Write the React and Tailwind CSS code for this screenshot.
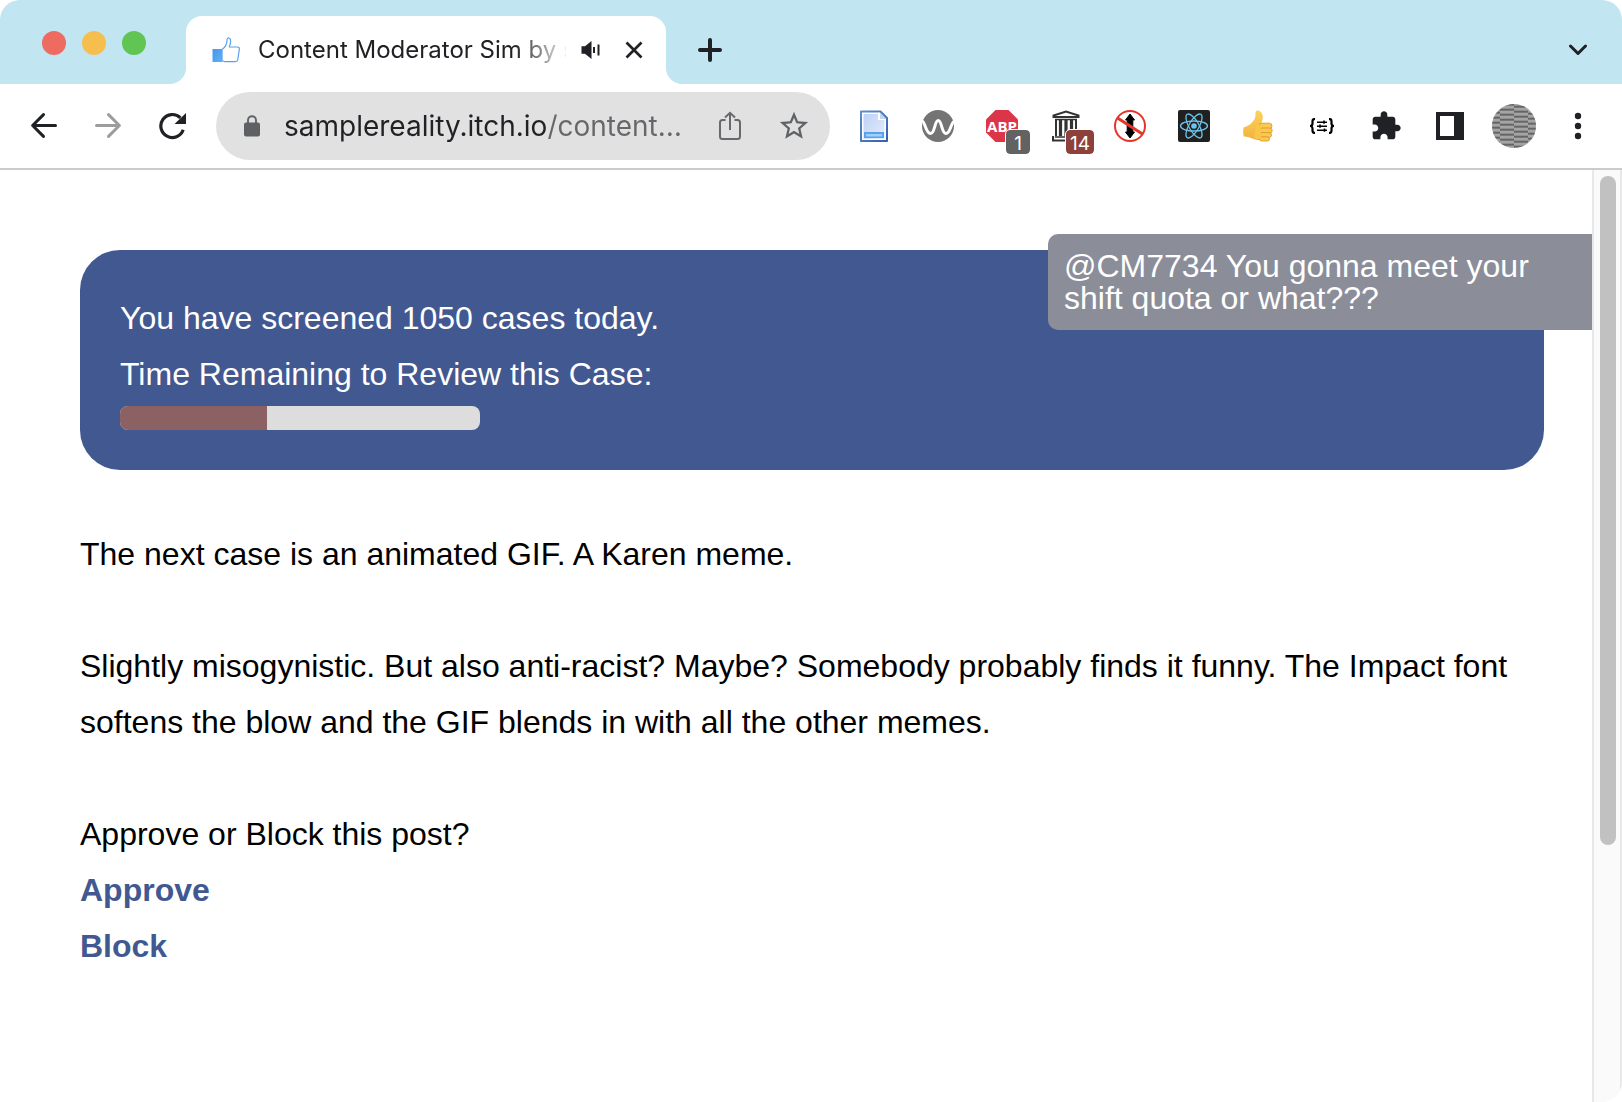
import React from "react";

const UI_FONT = "font-[Inter,'Liberation_Sans',sans-serif]";
const PAGE_FONT = "font-['Liberation_Sans',Arial,sans-serif]";

function ToolButton({ label, children }) {
  return (
    <button type="button" aria-label={label} className="relative flex h-16 w-16 shrink-0 items-center justify-center">
      {children}
    </button>
  );
}

function Badge({ className, children }) {
  return (
    <span className={"absolute top-[36px] flex h-6 items-center justify-center rounded-[4px] pt-1 text-[19px] leading-6 text-white outline-1 outline-white " + className}>
      {children}
    </span>
  );
}

function BackIcon() {
  return (
    <svg width="28" height="28" viewBox="0 0 28 28" fill="none" stroke="#202124" strokeWidth="3" strokeLinecap="round" strokeLinejoin="round">
      <path d="M25.5 13.500H2.800M13.500 2.600 2.600 13.500 13.500 24.400" />
    </svg>
  );
}

function ForwardIcon() {
  return (
    <svg width="28" height="28" viewBox="0 0 28 28" fill="none" stroke="#9c9c9c" strokeWidth="3" strokeLinecap="round" strokeLinejoin="round">
      <path d="M2.500 13.500H25.200M14.500 2.600 25.400 13.500 14.500 24.400" />
    </svg>
  );
}

function ReloadIcon() {
  return (
    <svg width="28" height="28" viewBox="0 0 28 28">
      <path d="M25.200 17.800A11.500 11.500 0 1 1 22.400 5.800" fill="none" stroke="#202124" strokeWidth="3.200" />
      <path d="M28 1V12H16.500Z" fill="#202124" />
    </svg>
  );
}

function LikeIcon() {
  return (
    <svg width="28" height="26" viewBox="0 0 28 26" className="shrink-0">
      <defs>
        <linearGradient id="like" x1="0" y1="0" x2="1" y2="1">
          <stop offset="0" stopColor="#4b93ea" />
          <stop offset="1" stopColor="#5cb4f5" />
        </linearGradient>
      </defs>
      <path d="M0.500 12H10V25H0.500Z" fill="url(#like)" />
      <path d="M10 12.500C13 10.500 15 7.500 15 3C15 0 18.600 0.300 18.600 4C18.600 6.500 17.600 8.500 17.400 10H25.500C27 10 27.500 11 27.300 12.500L25.800 22.500C25.500 24 24.800 24.600 23.500 24.600H13C11.500 24.600 11 23.800 10 23.600Z" fill="white" stroke="#5b9fef" strokeWidth="1.200" />
    </svg>
  );
}

function SpeakerIcon() {
  return (
    <svg width="20" height="18" viewBox="0 0 20 18" fill="#202124" className="shrink-0">
      <path d="M0.500 5.200H4L10.500 0V18L4 12.800H0.500Z" />
      <path d="M12 6H14V12H12ZM16.500 3.500H18.500V14.500H16.500Z" />
    </svg>
  );
}

function DocIcon() {
  return (
    <svg width="28" height="32" viewBox="0 0 28 32">
      <defs>
        <linearGradient id="doc" x1="0" y1="0" x2="1" y2="1">
          <stop offset="0" stopColor="#bdd0f6" />
          <stop offset="1" stopColor="#e6eefd" />
        </linearGradient>
        <linearGradient id="docEdge" x1="0" y1="0" x2="1" y2="1">
          <stop offset="0" stopColor="#5c8fcb" />
          <stop offset="1" stopColor="#3560b0" />
        </linearGradient>
      </defs>
      <path d="M1 1.500H20.500L27 8V31H1Z" fill="white" stroke="url(#docEdge)" strokeWidth="2" strokeLinejoin="round" />
      <path d="M3.500 4H18V10H24.500V29H3.500Z" fill="url(#doc)" />
      <path d="M18.500 2V9.500H26Z" fill="white" />
      <path d="M20 2 27 9H20Z" fill="#7f9fce" opacity=".45" />
      <path d="M4 22H24V28H4Z" fill="#58a2ee" />
      <path d="M6 24H22V26.500H6Z" fill="#9fd0fb" />
    </svg>
  );
}

function WaveIcon() {
  return (
    <svg width="32" height="32" viewBox="0 0 32 32">
      <circle cx="16" cy="16" r="16" fill="#747474" />
      <path d="M0 11C3 11 3.500 23.500 8.500 23.500C13 23.500 12.500 10.500 16.200 10.500C20 10.500 19.500 23.500 24 23.500C28.500 23.500 28.500 13.500 32 11.500" fill="none" stroke="white" strokeWidth="3" />
    </svg>
  );
}

function AdblockIcon() {
  return (
    <svg width="32" height="32" viewBox="0 0 32 32">
      <path d="M9.500 0H22.500L32 9.500V22.500L22.500 32H9.500L0 22.500V9.500Z" fill="#dc3548" />
      <text x="16" y="22" textAnchor="middle" fontFamily="Open Sans, sans-serif" fontWeight="700" fontSize="15" fill="white">ABP</text>
    </svg>
  );
}

function MuseumIcon() {
  return (
    <svg width="28" height="32" viewBox="0 0 28 32" fill="none" stroke="#333333">
      <path d="M1.500 7V5.500L14 1.500L26.500 5.500V7Z" fill="white" strokeWidth="2" />
      <path d="M3 9.500H25M3 27H25" strokeWidth="1.500" />
      <path d="M1 26V30.500H27V26" strokeWidth="2.200" />
      <path d="M4 9V26M24 9V26" strokeWidth="2" />
      <path d="M8.500 9.500V26M14 9.500V26M19.500 9.500V26" strokeWidth="3.200" />
    </svg>
  );
}

function NoScrollIcon() {
  return (
    <svg width="32" height="32" viewBox="0 0 32 32">
      <path d="M16 4 20.500 10H18.800V22H20.500L16 28L11.500 22H13.200V10H11.500Z" fill="black" stroke="black" strokeWidth="1" strokeLinejoin="round" />
      <circle cx="16" cy="16" r="15" fill="none" stroke="#e5352b" strokeWidth="2" />
      <path d="M3.500 8 28.500 24" stroke="#e5352b" strokeWidth="3" />
    </svg>
  );
}

function ReactIcon() {
  return (
    <svg width="32" height="32" viewBox="0 0 32 32">
      <rect width="32" height="32" rx="2" fill="#202020" />
      <g fill="none" stroke="#6ec4ec" strokeWidth="1.300">
        <ellipse cx="16" cy="16" rx="13.500" ry="5" />
        <ellipse cx="16" cy="16" rx="13.500" ry="5" transform="rotate(60 16 16)" />
        <ellipse cx="16" cy="16" rx="13.500" ry="5" transform="rotate(120 16 16)" />
      </g>
      <circle cx="16" cy="16" r="2.800" fill="#6ec4ec" />
    </svg>
  );
}

function ThumbIcon() {
  return (
    <svg width="30" height="32" viewBox="0 0 30 32">
      <defs>
        <linearGradient id="skin" x1="0" y1="0" x2="0" y2="1">
          <stop offset="0" stopColor="#fbd45c" />
          <stop offset="1" stopColor="#f2b13c" />
        </linearGradient>
      </defs>
      <path d="M0.500 17.500C6 16 10 12.500 12 8C13 5 11.800 2 13.500 0.800C16 -0.300 19.500 2 19.800 6.500C20 9.500 18.500 12 18.300 14L22 29C18 31 12 30 8 28C5 26.500 3 27.500 1 26.500C0 24 0 20 0.500 17.500Z" fill="url(#skin)" />
      <g fill="#fac94f" stroke="#d9922a" strokeWidth=".8">
        <rect x="16" y="13.200" width="13" height="5.600" rx="2.800" />
        <rect x="16.500" y="18" width="12.700" height="5.200" rx="2.600" />
        <rect x="16.500" y="22.600" width="12" height="4.800" rx="2.400" />
        <rect x="16.500" y="26.800" width="10" height="4.200" rx="2.100" />
      </g>
      <path d="M13.500 14.500C16 13.500 18 15 18 17V28C16 30 12 29 11 27Z" fill="#f9c54a" />
    </svg>
  );
}

function BracesIcon() {
  return (
    <svg width="26" height="16" viewBox="0 0 26 16" fill="none" stroke="black">
      <path d="M6 1.200H5.200C3.700 1.200 3.500 2 3.500 3.500V5.500C3.500 7 2.500 8 1 8C2.500 8 3.500 9 3.500 10.500V12.500C3.500 14 3.700 14.800 5.200 14.800H6" strokeWidth="2.200" />
      <path d="M20 1.200H20.800C22.300 1.200 22.500 2 22.500 3.500V5.500C22.500 7 23.500 8 25 8C23.500 8 22.500 9 22.500 10.500V12.500C22.500 14 22.300 14.800 20.800 14.800H20" strokeWidth="2.200" />
      <path d="M8 4.200H18M8 8.200H18M8 12.200H18" strokeWidth="1.600" />
      <path d="M15 2.600V5.800M11 6.600V9.800M15.500 10.600V13.800" strokeWidth="1.600" />
    </svg>
  );
}

function PuzzleIcon() {
  return (
    <svg width="32" height="32" viewBox="0 0 24 24" fill="#202124">
      <path d="M20.500 11H19V7c0-1.100-.9-2-2-2h-4V3.500C13 2.120 11.880 1 10.500 1S8 2.120 8 3.500V5H4c-1.100 0-1.990.9-1.990 2v3.800H3.500c1.490 0 2.700 1.210 2.700 2.700s-1.210 2.700-2.700 2.700H2V20c0 1.100.9 2 2 2h3.800v-1.500c0-1.490 1.210-2.700 2.700-2.700 1.490 0 2.700 1.210 2.700 2.700V22H17c1.100 0 2-.9 2-2v-4h1.500c1.380 0 2.500-1.120 2.500-2.500S21.880 11 20.500 11z" />
    </svg>
  );
}

function SidePanelIcon() {
  return (
    <svg width="28" height="28" viewBox="0 0 28 28">
      <path d="M0 0H28V28H0ZM4 4V24H18V4Z" fill="#202124" fillRule="evenodd" />
    </svg>
  );
}

const STRIPE_COLUMNS = [
  { x: 0, w: 8, off: 2 },
  { x: 8, w: 14, off: 0 },
  { x: 22, w: 14, off: 3 },
  { x: 36, w: 8, off: 1 },
];

function AvatarIcon() {
  return (
    <svg width="44" height="44" viewBox="0 0 44 44">
      <defs>
        <clipPath id="avatar"><circle cx="22" cy="22" r="22" /></clipPath>
      </defs>
      <g clipPath="url(#avatar)">
        <rect width="44" height="44" fill="#8f8f8f" />
        {STRIPE_COLUMNS.map((c) =>
          Array.from({ length: 10 }, (_, i) => (
            <g key={c.x + "-" + i}>
              <rect x={c.x} y={i * 5 - c.off} width={c.w} height="1.500" fill="#656565" />
              <rect x={c.x} y={i * 5 - c.off + 2.500} width={c.w} height="1" fill="#b9b9b9" />
            </g>
          ))
        )}
      </g>
    </svg>
  );
}

function MenuIcon() {
  return (
    <svg width="8" height="28" viewBox="0 0 8 28" fill="#202124">
      <circle cx="4" cy="4" r="3.200" />
      <circle cx="4" cy="14" r="3.200" />
      <circle cx="4" cy="24" r="3.200" />
    </svg>
  );
}

function TabStrip() {
  return (
    <div className="flex h-[84px]">
      <div className="flex w-[186px] shrink-0 gap-4 rounded-br-2xl bg-[#c1e6f1] pt-[31px] pl-[42px]">
        <button type="button" aria-label="Close window" className="size-6 rounded-full bg-[#ed6b60]" />
        <button type="button" aria-label="Minimize window" className="size-6 rounded-full bg-[#f5be4f]" />
        <button type="button" aria-label="Zoom window" className="size-6 rounded-full bg-[#61c554]" />
      </div>
      <div className="w-[480px] shrink-0 bg-[#c1e6f1] pt-4">
        <div className="flex h-[68px] items-center rounded-t-2xl bg-white pr-[23px] pl-[26px]">
          <LikeIcon />
          <span className="ml-[18px] w-[308px] overflow-hidden text-[24px] leading-8 whitespace-nowrap text-[#202124] [mask-image:linear-gradient(to_right,black_256px,transparent_312px)]">
            Content Moderator Sim by s
          </span>
          <button type="button" aria-label="Mute tab" className="ml-[15px]">
            <SpeakerIcon />
          </button>
          <button type="button" aria-label="Close tab" className="ml-auto">
            <svg width="18" height="18" viewBox="0 0 18 18" stroke="#202124" strokeWidth="2.700">
              <path d="M1.500 1.500 16.500 16.500M16.500 1.500 1.500 16.500" />
            </svg>
          </button>
        </div>
      </div>
      <div className="flex flex-1 items-center justify-between rounded-bl-2xl bg-[#c1e6f1] pt-4 pr-[34px] pl-8">
        <button type="button" aria-label="New tab">
          <svg width="24" height="24" viewBox="0 0 24 24" stroke="#202124" strokeWidth="4" strokeLinecap="round">
            <path d="M12 2V22M2 12H22" />
          </svg>
        </button>
        <button type="button" aria-label="Search tabs">
          <svg width="20" height="12" viewBox="0 0 20 12" fill="none" stroke="#202124" strokeWidth="3" strokeLinecap="round" strokeLinejoin="round">
            <path d="M2.500 2 10 9.500 17.500 2" />
          </svg>
        </button>
      </div>
    </div>
  );
}

function AddressBar() {
  return (
    <div className="mx-3 flex h-[68px] min-w-0 flex-1 items-center rounded-full bg-[#e1e1e1] pr-1 pl-7">
      <button type="button" aria-label="Site information" className="shrink-0">
        <svg width="16" height="22" viewBox="0 0 16 22">
          <rect x="0" y="7.500" width="16" height="14" rx="2" fill="#5f6063" />
          <path d="M4 8V5.200C4 0 12 0 12 5.200V8" fill="none" stroke="#5f6368" strokeWidth="1.900" />
        </svg>
      </button>
      <input
        type="text"
        aria-label="Address"
        defaultValue="samplereality.itch.io/content…"
        className="ml-6 h-10 min-w-0 flex-1 bg-linear-to-r from-[#202124] from-[264px] to-[#66676a] to-[264px] bg-clip-text text-[28px] text-transparent caret-black outline-none"
      />
      <div className="flex shrink-0">
        <ToolButton label="Share">
          <svg width="24" height="30" viewBox="0 0 24 30" fill="none" stroke="#68696c" strokeWidth="2">
            <path d="M7.500 9H4.500C3 9 2 10 2 11.500V25.500C2 27 3 28 4.500 28H19.500C21 28 22 27 22 25.500V11.500C22 10 21 9 19.500 9H16.500M12 19V2M7 6.500 12 1.800 17 6.500" />
          </svg>
        </ToolButton>
        <ToolButton label="Bookmark this tab">
          <svg width="34" height="34" viewBox="0 0 24 24" fill="#5f6368">
            <path d="M22 9.240l-7.190-.62L12 2 9.190 8.630 2 9.240l5.460 4.730L5.820 21 12 17.270 18.180 21l-1.630-7.030L22 9.240zM12 15.400l-3.760 2.270 1-4.280-3.320-2.880 4.380-.38L12 6.100l1.710 4.040 4.380.38-3.320 2.880 1 4.280L12 15.400z" />
          </svg>
        </ToolButton>
      </div>
    </div>
  );
}

function Toolbar() {
  return (
    <div className="flex h-[86px] items-center border-b-2 border-[#cbcbcb] bg-white px-3">
      <ToolButton label="Back"><BackIcon /></ToolButton>
      <ToolButton label="Forward"><ForwardIcon /></ToolButton>
      <ToolButton label="Reload"><ReloadIcon /></ToolButton>
      <AddressBar />
      <ToolButton label="Document extension"><DocIcon /></ToolButton>
      <ToolButton label="Wave extension"><WaveIcon /></ToolButton>
      <ToolButton label="Ad blocker">
        <AdblockIcon />
        <Badge className="left-9 w-6 bg-[#626262]">1</Badge>
      </ToolButton>
      <ToolButton label="Archive">
        <MuseumIcon />
        <Badge className="left-8 w-7 bg-[#8e403a]">14</Badge>
      </ToolButton>
      <ToolButton label="Stop scrolling"><NoScrollIcon /></ToolButton>
      <ToolButton label="React tools"><ReactIcon /></ToolButton>
      <ToolButton label="Thumbs up"><ThumbIcon /></ToolButton>
      <ToolButton label="JSON formatter"><BracesIcon /></ToolButton>
      <ToolButton label="Extensions"><PuzzleIcon /></ToolButton>
      <ToolButton label="Side panel"><SidePanelIcon /></ToolButton>
      <ToolButton label="Profile"><AvatarIcon /></ToolButton>
      <ToolButton label="Menu"><MenuIcon /></ToolButton>
    </div>
  );
}

function CaseStatus({ screened, remaining }) {
  return (
    <section className="rounded-[40px] bg-[#425891] p-10 text-white">
      <p>You have screened {screened} cases today.</p>
      <p id="time-label">Time Remaining to Review this Case:</p>
      <div
        role="progressbar"
        aria-labelledby="time-label"
        aria-valuenow={remaining}
        className="mt-1 h-6 w-[360px] overflow-hidden rounded-lg bg-[#dddddd]"
      >
        <div className="h-full bg-[#8b6163]" style={{ width: remaining + "%" }} />
      </div>
    </section>
  );
}

export default function App() {
  return (
    <div className="flex min-h-screen flex-col overflow-hidden rounded-[20px] bg-white">
      <header className={UI_FONT}>
        <TabStrip />
        <Toolbar />
      </header>
      <div className="flex flex-1">
        <main className={"relative flex-1 pt-20 pr-12 pb-16 pl-20 text-[32px] leading-[56px] text-black " + PAGE_FONT}>
          <CaseStatus screened={1050} remaining={40.8} />
          <aside className="absolute top-16 right-0 w-[544px] rounded-l-[10px] bg-[#8b8d99] p-4 leading-8 text-white">
            @CM7734 You gonna meet your shift quota or what???
          </aside>
          <div className="mt-14 flex flex-col gap-14">
            <p>The next case is an animated GIF. A Karen meme.</p>
            <p>
              Slightly misogynistic. But also anti-racist? Maybe? Somebody probably finds it funny. The Impact font
              softens the blow and the GIF blends in with all the other memes.
            </p>
            <div className="flex flex-col items-start">
              <p>Approve or Block this post?</p>
              <a href="#approve" className="font-bold text-[#425891]">Approve</a>
              <a href="#block" className="font-bold text-[#425891]">Block</a>
            </div>
          </div>
        </main>
        <div className="w-[30px] shrink-0 border-x-2 border-[#e8e8e8] bg-[#fafafa] pt-[6px] pl-[6px]">
          <div className="h-[72.3%] w-4 rounded-full bg-[#c1c1c1]" />
        </div>
      </div>
    </div>
  );
}
